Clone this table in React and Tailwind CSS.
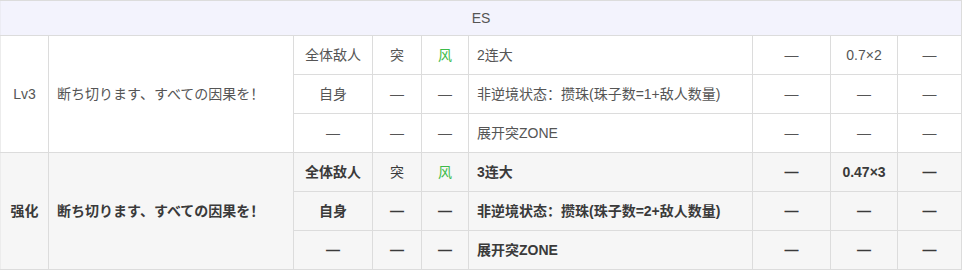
import React from 'react';

const rows = [
  {
    level: 'Lv3',
    name: '断ち切ります、すべての因果を！',
    strong: false,
    lines: [
      { target: '全体敌人', type: '突', elem: '风', desc: '2连大', a: '—', b: '0.7×2', c: '—' },
      { target: '自身', type: '—', elem: '—', desc: '非逆境状态：攒珠(珠子数=1+敌人数量)', a: '—', b: '—', c: '—' },
      { target: '—', type: '—', elem: '—', desc: '展开突ZONE', a: '—', b: '—', c: '—' },
    ],
  },
  {
    level: '强化',
    name: '断ち切ります、すべての因果を！',
    strong: true,
    lines: [
      { target: '全体敌人', type: '突', elem: '风', desc: '3连大', a: '—', b: '0.47×3', c: '—' },
      { target: '自身', type: '—', elem: '—', desc: '非逆境状态：攒珠(珠子数=2+敌人数量)', a: '—', b: '—', c: '—' },
      { target: '—', type: '—', elem: '—', desc: '展开突ZONE', a: '—', b: '—', c: '—' },
    ],
  },
];

const cell = 'border border-[#dcdcdc] px-2 text-center align-middle';

export default function App() {
  return (
    <div className="bg-white w-[968px] h-[275px] text-[14px] font-['Liberation_Sans','Noto_Sans_CJK_SC',sans-serif]">
      <table className="table-fixed border-collapse w-[962px]">
        <colgroup>
          <col className="w-[48px]" />
          <col className="w-[245px]" />
          <col className="w-[79px]" />
          <col className="w-[49px]" />
          <col className="w-[47px]" />
          <col className="w-[284px]" />
          <col className="w-[78px]" />
          <col className="w-[67px]" />
          <col className="w-[64px]" />
        </colgroup>
        <thead>
          <tr className="h-[35px] bg-[#f3f3fd]">
            <th colSpan={9} className={`${cell} border-l-[#ececf4] font-normal text-[#555]`}>ES</th>
          </tr>
        </thead>
        <tbody>
          {rows.map((g) =>
            g.lines.map((l, i) => (
              <tr
                key={g.level + i}
                className={`h-[39px] ${g.strong ? 'bg-[#f6f6f6] font-bold text-[#3a3a3a]' : 'text-[#555]'}`}
              >
                {i === 0 && (
                  <>
                    <td rowSpan={3} className={`${cell} border-l-[#ececec]`}>{g.level}</td>
                    <td rowSpan={3} className={`${cell} text-left`}>{g.name}</td>
                  </>
                )}
                <td className={cell}>{l.target}</td>
                <td className={`${cell} ${l.type === '突' ? 'font-normal' : ''}`}>{l.type}</td>
                <td className={`${cell} ${l.elem === '风' ? 'font-normal text-[#3dbb4a]' : ''}`}>{l.elem}</td>
                <td className={`${cell} text-left`}>{l.desc}</td>
                <td className={cell}>{l.a}</td>
                <td className={cell}>{l.b}</td>
                <td className={cell}>{l.c}</td>
              </tr>
            ))
          )}
        </tbody>
      </table>
    </div>
  );
}
